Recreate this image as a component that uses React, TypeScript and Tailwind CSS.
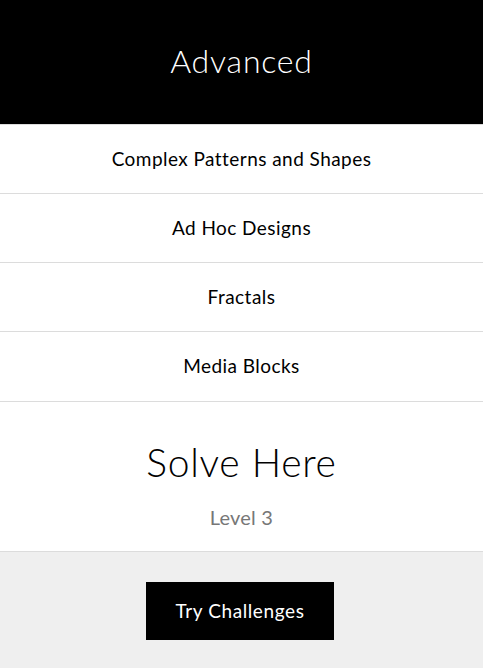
import React from "react";

const topics = ["Complex Patterns and Shapes", "Ad Hoc Designs", "Fractals", "Media Blocks"];

export default function App() {
  return (
    <div className="w-full min-h-screen bg-white font-['Lato',sans-serif] text-black">
      {/* Header */}
      <header className="h-[124px] bg-black flex items-center justify-center">
        <h1 className="text-[32px] font-light text-white tracking-[0.8px] -mt-[2px]">Advanced</h1>
      </header>

      {/* Topic list */}
      <ul>
        {topics.map((t, i) => (
          <li
            key={t}
            className={`${i === 3 ? "h-[70px]" : "h-[69px]"} border-t border-[#dcdcdc] flex items-center justify-center text-[19px] tracking-[0.45px]`}
          >
            {t}
          </li>
        ))}
      </ul>

      {/* Solve section */}
      <section className="h-[151px] border-t border-b border-[#dcdcdc] flex flex-col items-center pt-[34px]">
        <h2 className="text-[39px] font-light leading-[52px] tracking-[0.7px]">Solve Here</h2>
        <p className="mt-[14px] text-[20px] text-[#777] tracking-[0.2px]">Level 3</p>
      </section>

      {/* Footer */}
      <footer className="h-[116px] bg-[#efefef] flex justify-center pt-[30px] pr-[3px]">
        <button className="w-[188px] h-[58px] bg-black text-white text-[19px] tracking-[0.6px]">
          Try Challenges
        </button>
      </footer>
    </div>
  );
}
